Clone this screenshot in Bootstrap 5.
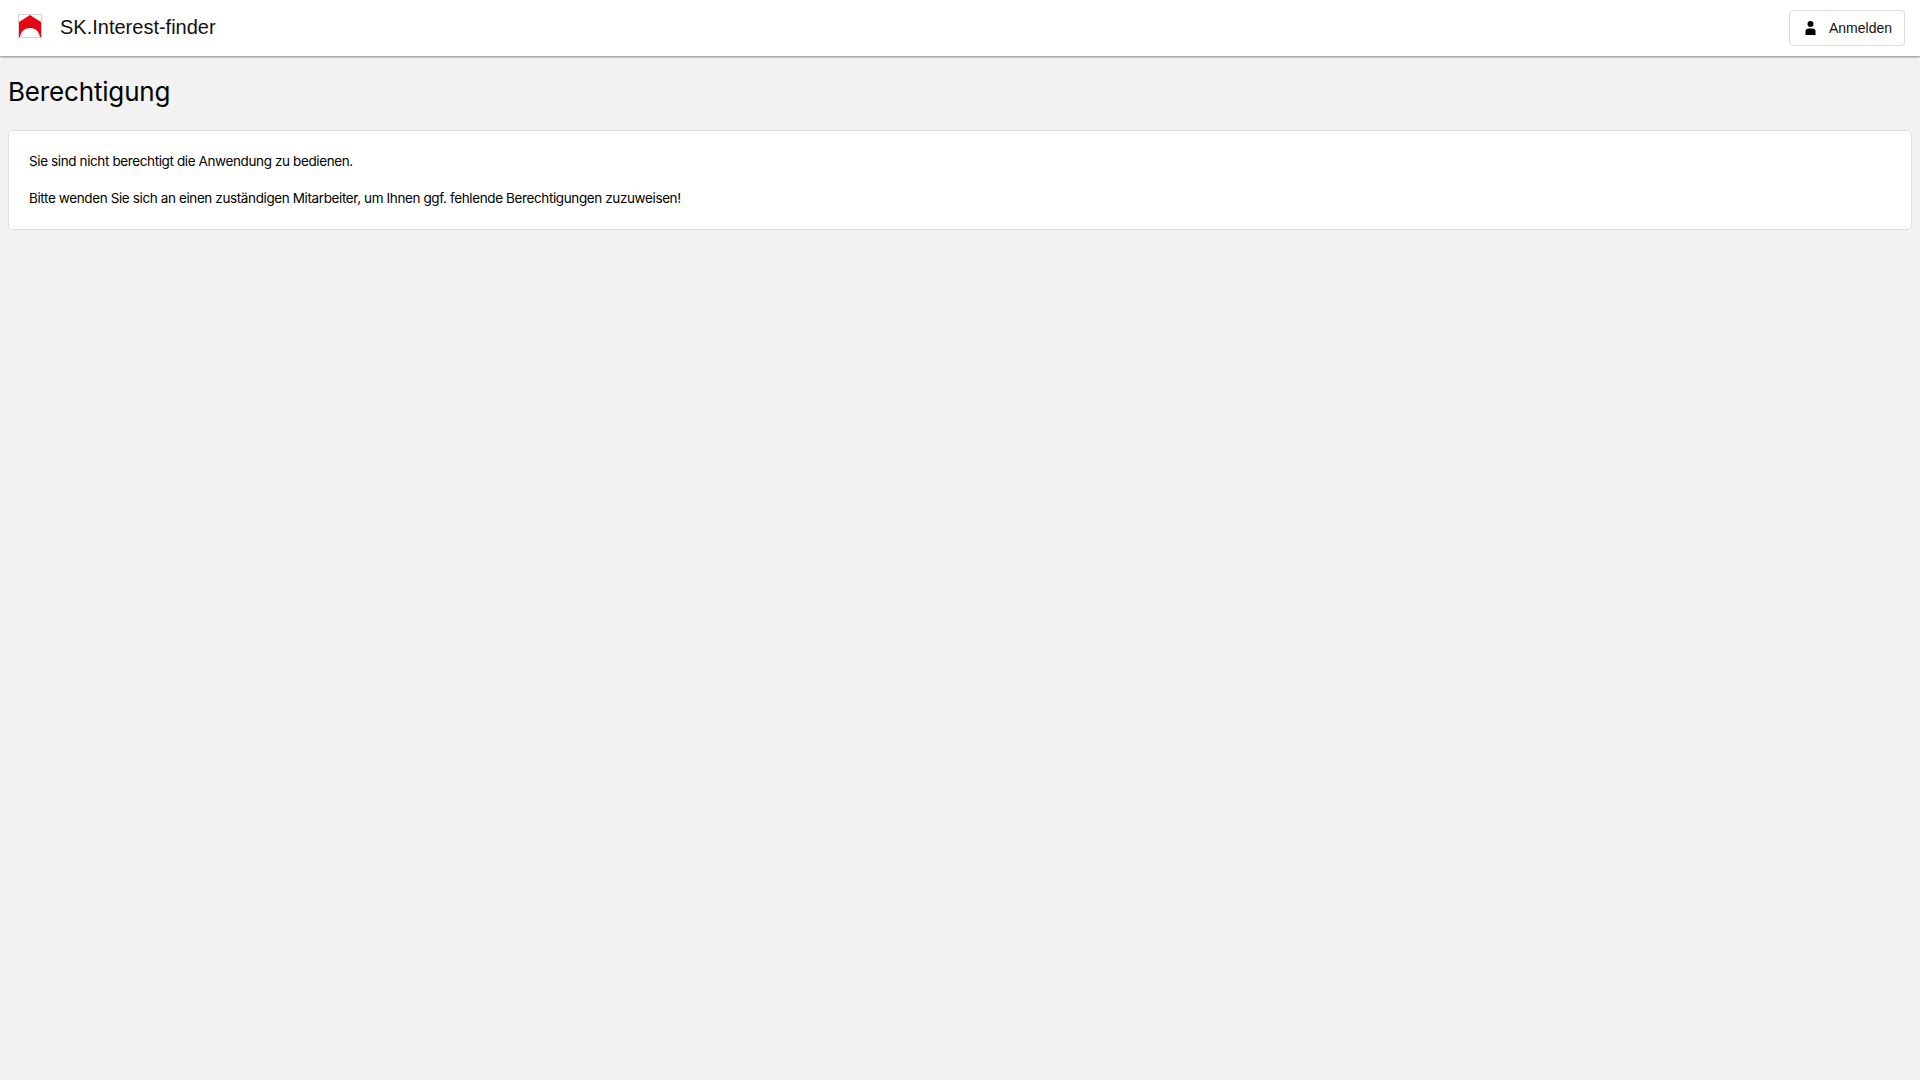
<!DOCTYPE html>
<html lang="de">
<head>
<meta charset="utf-8">
<title>SK.Interest-finder</title>
<link href="https://cdn.jsdelivr.net/npm/bootstrap@5.3.0/dist/css/bootstrap.min.css" rel="stylesheet">
<style>
body { background: #f2f2f2; color: #000; font-family: "Inter", "Liberation Sans", sans-serif; font-size: 13.5px; letter-spacing: -.385px; min-height: 1080px; }
.top-bar { height: 56px; background: #fff; box-shadow: 0 1px 2px rgba(0,0,0,.45); padding: 0 15px 0 18px; letter-spacing: 0; }
.logo-box { width: 24px; height: 24px; display: block; margin-top: -4px; }
.app-name { font-family: "Liberation Sans", sans-serif; font-size: 20px; color: #111; margin-left: 18px; line-height: 1; margin-top: -2px; }
.login-btn { font-family: "Liberation Sans", sans-serif; font-size: 14px; height: 36px; width: 116px; background: #fff; border: 1px solid #dcdcdc; border-radius: 4px; color: #111; padding: 0 12px 0 15px; }
.page-title { font-size: 26px; letter-spacing: -.17px; font-weight: 400; margin: 0; padding: 18px 8px 0; line-height: 36px; height: 74px; }
.msg-card { margin: 0 8px; height: 100px; border: 1px solid #dfdfdf; border-radius: 5px; padding: 21px 20px 0; }
.msg-card p { margin: 0; line-height: 18px; }
.msg-card p + p { margin-top: 19px; }
</style>
</head>
<body>
<header class="top-bar d-flex align-items-center justify-content-between">
  <div class="d-flex align-items-center">
    <svg class="logo-box" viewBox="0 0 24 24"><rect x=".5" y=".5" width="23" height="23" fill="#fff" stroke="#d4d4d4"/><path d="M1 8 12 1 23 8V23H22C21 17 17 14 12 14S3 17 2 23H1Z" fill="#e30613"/></svg>
    <span class="app-name">SK.Interest-finder</span>
  </div>
  <button type="button" class="login-btn d-flex align-items-center justify-content-between">
    <svg width="11" height="14" viewBox="0 0 11 14"><circle cx="5.500" cy="3" r="3" fill="#000"/><path d="M.5 14V10C.5 8.500 2 7.500 3.500 7.500H7.500C9 7.500 10.500 8.500 10.500 10V14Z" fill="#000"/></svg>
    <span>Anmelden</span>
  </button>
</header>
<main>
  <h1 class="page-title">Berechtigung</h1>
  <div class="msg-card bg-white">
    <p>Sie sind nicht berechtigt die Anwendung zu bedienen.</p>
    <p>Bitte wenden Sie sich an einen zuständigen Mitarbeiter, um Ihnen ggf. fehlende Berechtigungen zuzuweisen!</p>
  </div>
</main>
<script src="https://cdn.jsdelivr.net/npm/bootstrap@5.3.0/dist/js/bootstrap.bundle.min.js"></script>
</body>
</html>
